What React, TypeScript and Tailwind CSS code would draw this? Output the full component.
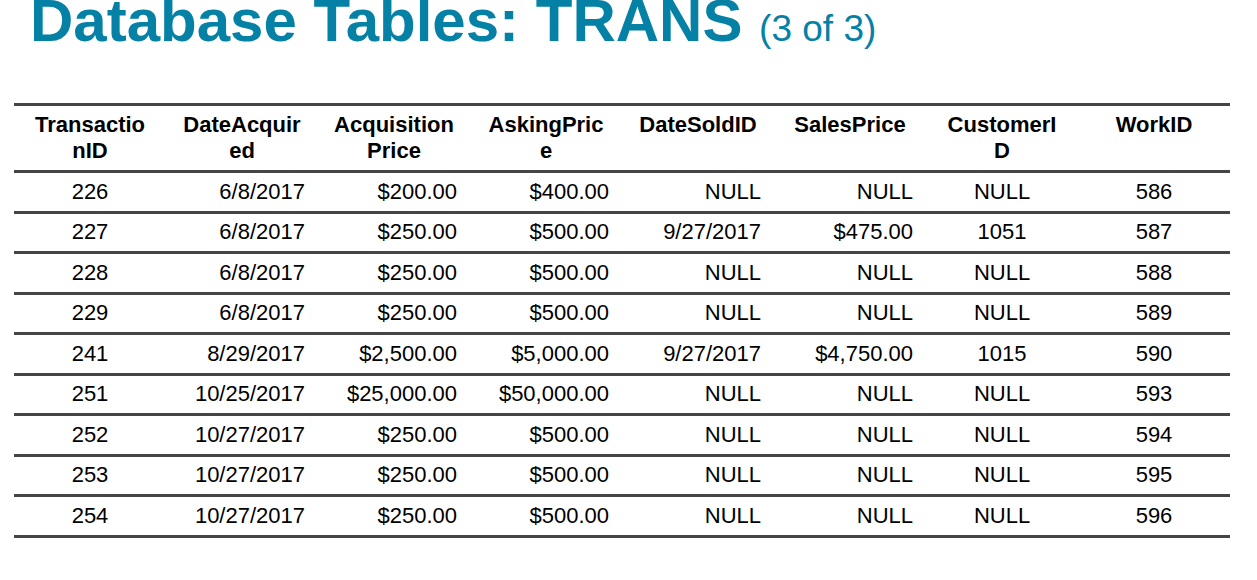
import React from "react";

type Row = {
  id: string;
  dateAcquired: string;
  acquisitionPrice: string;
  askingPrice: string;
  dateSold: string;
  salesPrice: string;
  customerId: string;
  workId: string;
};

const rows: Row[] = [
  { id: "226", dateAcquired: "6/8/2017", acquisitionPrice: "$200.00", askingPrice: "$400.00", dateSold: "NULL", salesPrice: "NULL", customerId: "NULL", workId: "586" },
  { id: "227", dateAcquired: "6/8/2017", acquisitionPrice: "$250.00", askingPrice: "$500.00", dateSold: "9/27/2017", salesPrice: "$475.00", customerId: "1051", workId: "587" },
  { id: "228", dateAcquired: "6/8/2017", acquisitionPrice: "$250.00", askingPrice: "$500.00", dateSold: "NULL", salesPrice: "NULL", customerId: "NULL", workId: "588" },
  { id: "229", dateAcquired: "6/8/2017", acquisitionPrice: "$250.00", askingPrice: "$500.00", dateSold: "NULL", salesPrice: "NULL", customerId: "NULL", workId: "589" },
  { id: "241", dateAcquired: "8/29/2017", acquisitionPrice: "$2,500.00", askingPrice: "$5,000.00", dateSold: "9/27/2017", salesPrice: "$4,750.00", customerId: "1015", workId: "590" },
  { id: "251", dateAcquired: "10/25/2017", acquisitionPrice: "$25,000.00", askingPrice: "$50,000.00", dateSold: "NULL", salesPrice: "NULL", customerId: "NULL", workId: "593" },
  { id: "252", dateAcquired: "10/27/2017", acquisitionPrice: "$250.00", askingPrice: "$500.00", dateSold: "NULL", salesPrice: "NULL", customerId: "NULL", workId: "594" },
  { id: "253", dateAcquired: "10/27/2017", acquisitionPrice: "$250.00", askingPrice: "$500.00", dateSold: "NULL", salesPrice: "NULL", customerId: "NULL", workId: "595" },
  { id: "254", dateAcquired: "10/27/2017", acquisitionPrice: "$250.00", askingPrice: "$500.00", dateSold: "NULL", salesPrice: "NULL", customerId: "NULL", workId: "596" },
];

const headers = [
  "TransactionID",
  "DateAcquired",
  "AcquisitionPrice",
  "AskingPrice",
  "DateSoldID",
  "SalesPrice",
  "CustomerID",
  "WorkID",
];

// Acquisition Price wraps on the space, the rest break mid-word like the slide
const headerText = (h: string) => (h === "AcquisitionPrice" ? "Acquisition Price" : h);

const App: React.FC = () => {
  return (
    <div
      className="w-[1257px] h-[580px] overflow-hidden bg-white text-black"
      style={{ fontFamily: '"Liberation Sans", Arial, sans-serif' }}
    >
      <h1 className="pl-[30px] mt-[-9px] leading-none text-[60px] font-bold text-[#0681a6] whitespace-nowrap">
        Database Tables: TRANS{" "}
        <span className="text-[37px] font-normal">(3 of 3)</span>
      </h1>

      <div className="ml-[14px] mt-[52px] w-[1216px]">
        <div className="grid grid-cols-8 h-[70px] border-y-[3px] border-[#454545]">
          {headers.map((h) => (
            <div
              key={h}
              className="px-[15px] pt-[6px] text-center text-[22px] leading-[26px] font-bold break-all"
            >
              {headerText(h)}
            </div>
          ))}
        </div>

        {rows.map((r) => (
          <div
            key={r.id}
            className="grid grid-cols-8 items-center h-[40.5px] border-b-[3px] border-[#454545] text-[22px] leading-[26px]"
          >
            <div className="px-[13px] text-center">{r.id}</div>
            <div className="px-[13px] text-right">{r.dateAcquired}</div>
            <div className="px-[13px] text-right">{r.acquisitionPrice}</div>
            <div className="px-[13px] text-right">{r.askingPrice}</div>
            <div className="px-[13px] text-right">{r.dateSold}</div>
            <div className="px-[13px] text-right">{r.salesPrice}</div>
            <div className="px-[13px] text-center">{r.customerId}</div>
            <div className="px-[13px] text-center">{r.workId}</div>
          </div>
        ))}
      </div>
    </div>
  );
};

export default App;
